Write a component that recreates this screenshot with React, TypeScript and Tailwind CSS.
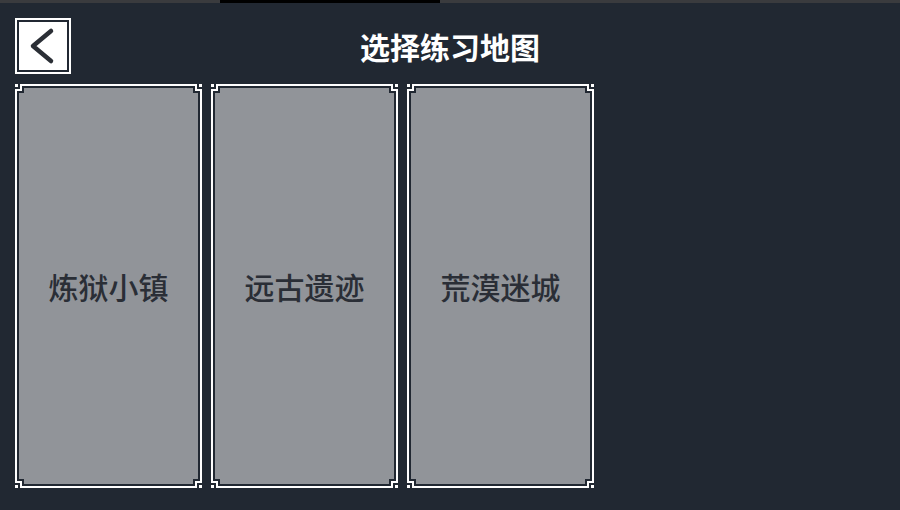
import React from "react";

const maps = ["炼狱小镇", "远古遗迹", "荒漠迷城"];

const W = 187;
const H = 404;

// Notched frame polygon; c = notch size, d = inset from the outer edge
function notched(c: number, d: number) {
  const pts = [
    [c + d, d],
    [W - c - d, d],
    [W - c - d, c + d],
    [W - d, c + d],
    [W - d, H - c - d],
    [W - c - d, H - c - d],
    [W - c - d, H - d],
    [c + d, H - d],
    [c + d, H - c - d],
    [d, H - c - d],
    [d, c + d],
    [c + d, c + d],
  ];
  return pts.map((p) => p.join(",")).join(" ");
}

function MapCard({ name }: { name: string }) {
  return (
    <button className="relative flex h-[404px] w-[187px] shrink-0 items-center justify-center">
      <svg
        className="absolute inset-0"
        width={W}
        height={H}
        viewBox={`0 0 ${W} ${H}`}
        shapeRendering="crispEdges"
      >
        <polygon points={notched(5, 4)} fill="#919499" />
        <polygon points={notched(5, 1)} fill="none" stroke="#ffffff" strokeWidth={2} />
        <rect x={0} y={0} width={3} height={3} fill="#ffffff" />
        <rect x={W - 3} y={0} width={3} height={3} fill="#ffffff" />
        <rect x={0} y={H - 3} width={3} height={3} fill="#ffffff" />
        <rect x={W - 3} y={H - 3} width={3} height={3} fill="#ffffff" />
      </svg>
      <span className="relative text-[30px] font-medium leading-none text-[#2a2e36]">
        {name}
      </span>
    </button>
  );
}

export default function App() {
  return (
    <div
      className="flex h-[510px] w-[900px] flex-col overflow-hidden bg-[#212832]"
      style={{ fontFamily: '"Noto Sans CJK SC", "Noto Sans", sans-serif' }}
    >
      <div className="flex h-[3px] shrink-0">
        <div className="w-[220px] bg-[#3a3b3e]" />
        <div className="w-[220px] bg-black" />
        <div className="flex-1 bg-[#3a3b3e]" />
      </div>

      <div className="relative flex h-[66px] shrink-0 items-start pl-[15px] pt-[15px]">
        <button className="flex h-[56px] w-[56px] items-center justify-center border-2 border-white bg-[#212832] p-[2px]">
          <span className="flex h-full w-full items-center justify-center bg-white">
            <svg width="40" height="40" viewBox="0 0 40 40">
              <polyline
                points="28,5 10,20 28,35"
                fill="none"
                stroke="#2b2f36"
                strokeWidth={4.5}
                strokeLinecap="round"
                strokeLinejoin="round"
              />
            </svg>
          </span>
        </button>
        <h1 className="absolute left-0 right-0 top-[28px] text-center text-[30px] font-bold leading-none text-white">
          选择练习地图
        </h1>
      </div>

      <div className="flex gap-[9px] pl-[15px] pt-[15px]">
        {maps.map((m) => (
          <MapCard key={m} name={m} />
        ))}
      </div>
    </div>
  );
}
